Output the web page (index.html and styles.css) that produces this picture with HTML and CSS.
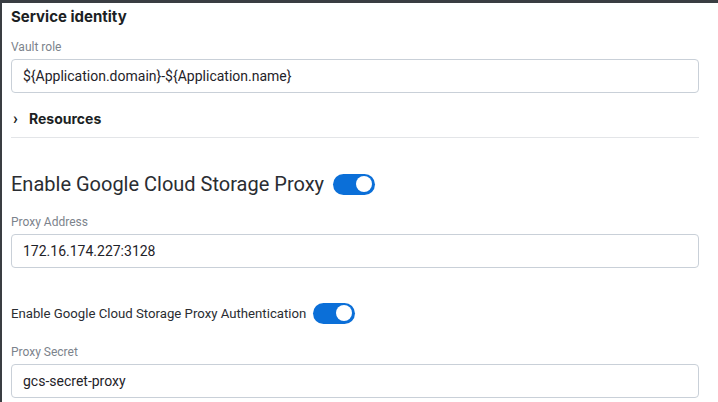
FILE: index.html
```html
<!DOCTYPE html>
<html>
<head>
<meta charset="utf-8">
<link rel="stylesheet" href="styles.css">
</head>
<body>
<div class="topbar"></div>
<div class="panel">
  <h2 class="section-title">Service identity</h2>
  <div class="field first">
    <label class="label">Vault role</label>
    <div class="input">${Application.domain}-${Application.name}</div>
  </div>
  <div class="collapse">
    <span class="chev">›</span>
    <span class="collapse-title">Resources</span>
  </div>
  <div class="divider"></div>

  <div class="toggle-row big">
    <span class="toggle-label">Enable Google Cloud Storage Proxy</span>
    <span class="switch"><span class="knob"></span></span>
  </div>
  <div class="field after-big">
    <label class="label">Proxy Address</label>
    <div class="input">172.16.174.227:3128</div>
  </div>

  <div class="toggle-row small">
    <span class="toggle-label">Enable Google Cloud Storage Proxy Authentication</span>
    <span class="switch"><span class="knob"></span></span>
  </div>
  <div class="field after-small">
    <label class="label">Proxy Secret</label>
    <div class="input">gcs-secret-proxy</div>
  </div>
</div>
</body>
</html>
```
FILE: styles.css
```css
html, body {
  margin: 0;
  padding: 0;
  background: #ffffff;
  height: 100%;
  overflow: hidden;
}
body {
  font-family: Roboto, "Liberation Sans", sans-serif;
  color: #1f2329;
  border-left: 2px solid #3a3d42;
  box-sizing: border-box;
}
.topbar {
  height: 3px;
  background: #3a3d42;
}
.panel {
  padding: 0 19px 0 9px;
  display: flex;
  flex-direction: column;
}
.section-title {
  font-family: Inter, Roboto, sans-serif;
  font-size: 15px;
  font-weight: 700;
  margin: 5px 0 0 0;
  line-height: 18px;
  color: #1c1f24;
}
.field {
  display: flex;
  flex-direction: column;
}
.label {
  font-size: 12px;
  color: #7c838c;
  line-height: 14px;
  margin: 0 0 5px 0;
}
.field.first .label {
  margin-top: 14px;
}
.field.after-big .label {
  margin-top: 19px;
}
.field.after-small .label {
  margin-top: 21px;
}
.input {
  height: 34px;
  box-sizing: border-box;
  border: 1px solid #c9d0d8;
  border-radius: 4px;
  padding: 0 11px;
  display: flex;
  align-items: center;
  font-size: 14px;
  color: #1f2329;
}
.collapse {
  display: flex;
  align-items: center;
  height: 22px;
  margin-top: 14px;
  padding-left: 2px;
}
.chev {
  font-size: 16px;
  font-weight: 700;
  width: 16px;
  color: #1c1f24;
}
.collapse-title {
  font-family: Inter, Roboto, sans-serif;
  font-size: 14px;
  font-weight: 700;
  color: #1c1f24;
}
.divider {
  height: 1px;
  background: #e3e5e8;
  margin-top: 8px;
}
.toggle-row {
  display: flex;
  align-items: center;
  gap: 9px;
}
.toggle-row.big {
  margin-top: 34px;
  height: 24px;
}
.toggle-row.big .toggle-label {
  font-size: 20px;
  color: #2a2d32;
}
.toggle-row.small {
  margin-top: 34px;
  height: 22px;
  gap: 7px;
}
.toggle-row.small .toggle-label {
  font-size: 13.2px;
  color: #2a2d32;
}
.switch {
  width: 42px;
  height: 21px;
  border-radius: 11px;
  background: #0b6fd8;
  display: flex;
  align-items: center;
  justify-content: flex-end;
  padding: 0 3px;
  box-sizing: border-box;
}
.knob {
  width: 16px;
  height: 16px;
  border-radius: 50%;
  background: #ffffff;
}
```
